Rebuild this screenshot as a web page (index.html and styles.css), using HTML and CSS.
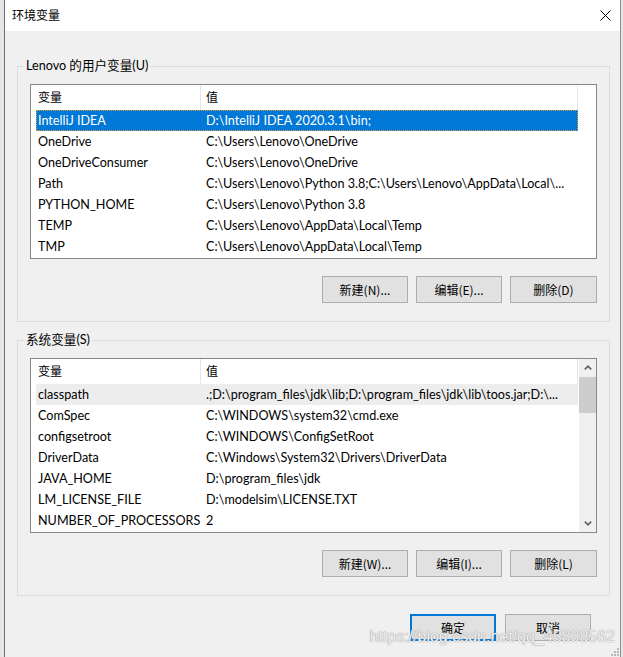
FILE: index.html
```html
<!DOCTYPE html>
<html lang="zh-CN">
<head>
<meta charset="utf-8">
<title>环境变量</title>
<link rel="stylesheet" href="styles.css">
</head>
<body>
<div class="window">
  <div class="titlebar">
    <span class="title">环境变量</span>
    <svg class="close" width="11" height="11" viewBox="0 0 11 11"><path d="M0.5 0.5 L10.5 10.5 M10.5 0.5 L0.5 10.5" stroke="#000" stroke-width="1" fill="none"/></svg>
  </div>
  <div class="content">
    <div class="group">
      <span class="group-label">Lenovo 的用户变量(U)</span>
      <div class="list">
        <div class="list-main">
          <div class="hdr"><div class="hcell c1">变量</div><div class="hcell c2">值</div></div>
          <div class="row selected"><div class="cell">IntelliJ IDEA</div><div class="cell v">D:\IntelliJ IDEA 2020.3.1\bin;</div></div>
          <div class="row"><div class="cell">OneDrive</div><div class="cell v">C:\Users\Lenovo\OneDrive</div></div>
          <div class="row"><div class="cell">OneDriveConsumer</div><div class="cell v">C:\Users\Lenovo\OneDrive</div></div>
          <div class="row"><div class="cell">Path</div><div class="cell v">C:\Users\Lenovo\Python 3.8;C:\Users\Lenovo\AppData\Local\...</div></div>
          <div class="row"><div class="cell">PYTHON_HOME</div><div class="cell v">C:\Users\Lenovo\Python 3.8</div></div>
          <div class="row"><div class="cell">TEMP</div><div class="cell v">C:\Users\Lenovo\AppData\Local\Temp</div></div>
          <div class="row"><div class="cell">TMP</div><div class="cell v">C:\Users\Lenovo\AppData\Local\Temp</div></div>
        </div>
        <div class="list-side"></div>
      </div>
      <div class="btns">
        <button class="btn">新建(N)...</button>
        <button class="btn">编辑(E)...</button>
        <button class="btn btn-last">删除(D)</button>
      </div>
    </div>

    <div class="group group2">
      <span class="group-label">系统变量(S)</span>
      <div class="list">
        <div class="list-main">
          <div class="hdr"><div class="hcell c1">变量</div><div class="hcell c2">值</div></div>
          <div class="row inactive"><div class="cell">classpath</div><div class="cell v">.;D:\program_files\jdk\lib;D:\program_files\jdk\lib\toos.jar;D:\...</div></div>
          <div class="row"><div class="cell">ComSpec</div><div class="cell v">C:\WINDOWS\system32\cmd.exe</div></div>
          <div class="row"><div class="cell">configsetroot</div><div class="cell v">C:\WINDOWS\ConfigSetRoot</div></div>
          <div class="row"><div class="cell">DriverData</div><div class="cell v">C:\Windows\System32\Drivers\DriverData</div></div>
          <div class="row"><div class="cell">JAVA_HOME</div><div class="cell v">D:\program_files\jdk</div></div>
          <div class="row"><div class="cell">LM_LICENSE_FILE</div><div class="cell v">D:\modelsim\LICENSE.TXT</div></div>
          <div class="row"><div class="cell">NUMBER_OF_PROCESSORS</div><div class="cell v">2</div></div>
        </div>
        <div class="list-side">
          <div class="scrollbar">
            <div class="sb-arrow"><svg width="8" height="5" viewBox="0 0 8 5"><polyline points="0.8,4.4 4,1.2 7.2,4.4" fill="none" stroke="#606060" stroke-width="1.6"/></svg></div>
            <div class="sb-thumb"></div>
            <div class="sb-track"></div>
            <div class="sb-arrow"><svg width="8" height="5" viewBox="0 0 8 5"><polyline points="0.8,0.6 4,3.8 7.2,0.6" fill="none" stroke="#606060" stroke-width="1.6"/></svg></div>
          </div>
        </div>
      </div>
      <div class="btns">
        <button class="btn">新建(W)...</button>
        <button class="btn">编辑(I)...</button>
        <button class="btn btn-last">删除(L)</button>
      </div>
    </div>

    <div class="footer">
      <button class="btn btn-default">确定</button>
      <button class="btn">取消</button>
    </div>
  </div>
  <div class="watermark">https://blog.csdn.net/qq_45838562</div>
  <svg class="grip" width="8" height="8" viewBox="0 0 8 8">
    <rect x="6" y="0" width="2" height="2" fill="#b8b8b8"/>
    <rect x="3" y="3" width="2" height="2" fill="#b8b8b8"/>
    <rect x="6" y="3" width="2" height="2" fill="#b8b8b8"/>
    <rect x="0" y="6" width="2" height="2" fill="#b8b8b8"/>
    <rect x="3" y="6" width="2" height="2" fill="#b8b8b8"/>
    <rect x="6" y="6" width="2" height="2" fill="#b8b8b8"/>
  </svg>
</div>
</body>
</html>
```

FILE: styles.css
```css
* { box-sizing: border-box; }
html, body { margin: 0; padding: 0; }
body {
  width: 623px;
  height: 657px;
  overflow: hidden;
  background: #e6e6e6;
  font-family: "Lato", "Noto Sans CJK SC", sans-serif;
  font-size: 12.6px;
  color: #000;
}
.window {
  position: relative;
  margin-left: 4px;
  width: 617px;
  height: 657px;
  border-left: 1px solid #6e6e6e;
  border-right: 1px solid #8e8e8e;
  background: #f0f0f0;
  overflow: hidden;
}
.titlebar {
  height: 31px;
  background: #fff;
  display: flex;
  align-items: center;
  justify-content: space-between;
  padding: 0 9px 1px 7px;
}
.title {
  font-family: "Noto Sans CJK SC", sans-serif;
  font-size: 12px;
  line-height: 16px;
}
.close { display: block; }
.content {
  padding: 0 10px 0 12px;
}
.group {
  position: relative;
  margin-top: 35px;
  border: 1px solid #dcdcdc;
  padding: 17px 12px 18px 12px;
}
.group2 { margin-top: 18px; }
.group-label {
  position: absolute;
  top: -9px;
  left: 6px;
  padding: 0 2px;
  background: #f0f0f0;
  line-height: 16px;
  white-space: nowrap;
}
.list {
  height: 175px;
  border: 1px solid #828790;
  background: #fff;
  display: flex;
}
.list-main {
  width: 547px;
  flex: none;
}
.list-side {
  width: 18px;
  flex: none;
  padding-left: 1px;
}
.hdr {
  display: grid;
  grid-template-columns: 170px 377px;
  height: 25px;
}
.hcell {
  line-height: 24px;
  font-size: 12px;
  border-right: 1px solid #e5e5e5;
  font-family: "Noto Sans CJK SC", sans-serif;
}
.hcell.c1 { padding-left: 7px; }
.hcell.c2 { padding-left: 5px; }
.row {
  display: grid;
  grid-template-columns: 165px 377px;
  margin-left: 5px;
  width: 542px;
  height: 21px;
  line-height: 21px;
  white-space: nowrap;
}
.cell {
  padding-left: 2px;
  overflow: hidden;
}
.cell.v { padding-left: 5px; }
.row.selected {
  background: #0078d7;
  color: #fff;
  outline: 1px dotted #e59a3c;
  outline-offset: -1px;
}
.row.inactive { background: #ededed; }
.scrollbar {
  height: 173px;
  background: #f0f0f0;
  display: flex;
  flex-direction: column;
}
.sb-arrow {
  height: 17px;
  flex: none;
  display: flex;
  align-items: center;
  justify-content: center;
}
.sb-thumb {
  height: 36px;
  margin-top: 1px;
  background: #cdcdcd;
  flex: none;
}
.sb-track { flex: 1; }
.btns {
  display: flex;
  justify-content: flex-end;
  gap: 8px;
  margin-top: 17px;
}
.btn {
  width: 86px;
  height: 27px;
  margin: 0;
  padding: 0;
  background: #e1e1e1;
  border: 1px solid #adadad;
  font-family: "Noto Sans CJK SC", sans-serif;
  font-size: 12px;
  color: #000;
}
.btn-last { width: 87px; }
.btn-default { border: 2px solid #0078d7; }
.footer {
  display: flex;
  justify-content: flex-end;
  gap: 9px;
  margin-top: 18px;
  padding-right: 19px;
}
.watermark {
  position: absolute;
  right: 5px;
  top: 627px;
  font-family: "Liberation Sans", sans-serif;
  font-size: 16px;
  line-height: 20px;
  color: rgba(255, 255, 255, 0.85);
  text-shadow: 0 0 1px #9a9a9a, 0 0 1px #9a9a9a;
  white-space: nowrap;
  pointer-events: none;
}
.grip {
  position: absolute;
  right: 1px;
  bottom: 1px;
}
```
